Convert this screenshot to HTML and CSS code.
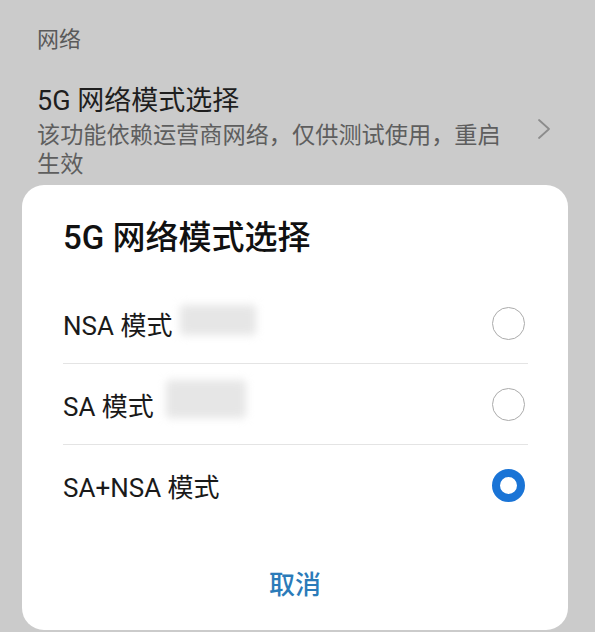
FILE: index.html
```html
<!DOCTYPE html>
<html lang="zh-CN">
<head>
<meta charset="utf-8">
<title>5G 网络模式选择</title>
<link rel="stylesheet" href="styles.css">
</head>
<body>
<div class="settings">
  <div class="section-label">网络</div>
  <div class="item">
    <div class="item-text">
      <div class="item-title">5G 网络模式选择</div>
      <div class="item-desc">该功能依赖运营商网络，仅供测试使用，重启生效</div>
    </div>
    <svg class="chevron" width="16" height="24" viewBox="0 0 16 24"><polyline points="3,3 13,12 3,21" fill="none" stroke="#8c8c8c" stroke-width="1.8" stroke-linejoin="round" stroke-linecap="round"/></svg>
  </div>
</div>
<div class="dialog">
  <div class="dialog-title">5G 网络模式选择</div>
  <div class="options">
    <div class="option">
      <span class="option-label">NSA 模式</span>
      <span class="blur blur-a"></span>
      <span class="radio"></span>
    </div>
    <div class="option">
      <span class="option-label">SA 模式</span>
      <span class="blur blur-b"></span>
      <span class="radio"></span>
    </div>
    <div class="option">
      <span class="option-label">SA+NSA 模式</span>
      <span class="radio radio-on"></span>
    </div>
  </div>
  <div class="dialog-footer">
    <span class="btn-cancel">取消</span>
  </div>
</div>
</body>
</html>
```
FILE: styles.css
```css
html, body {
  margin: 0;
  padding: 0;
}
body {
  width: 595px;
  height: 632px;
  overflow: hidden;
  background: #cbcbcb;
  font-family: Roboto, "Noto Sans CJK SC", sans-serif;
}
.settings {
  height: 185px;
  box-sizing: border-box;
  padding: 25px 0 0 37px;
}
.section-label {
  font-size: 22px;
  line-height: 30px;
  color: #5a5a5a;
}
.item {
  margin-top: 29px;
  display: flex;
  align-items: center;
}
.item-text {
  width: 472px;
}
.item-title {
  font-size: 27px;
  line-height: 34px;
  color: #1e1e1e;
}
.item-desc {
  margin-top: 3px;
  font-size: 23.2px;
  line-height: 29px;
  color: #5e5e5e;
}
.chevron {
  margin-left: 27px;
  margin-bottom: 6px;
}
.dialog {
  margin: 0 27px 0 22px;
  height: 445px;
  box-sizing: border-box;
  background: #ffffff;
  border-radius: 22px;
  padding: 31px 40px 0 41px;
}
.dialog-title {
  font-size: 33px;
  line-height: 43px;
  font-weight: 500;
  color: #111111;
}
.options {
  margin-top: 24px;
}
.option {
  height: 80px;
  display: flex;
  align-items: center;
  border-bottom: 1px solid #e4e4e4;
}
.option:last-child {
  border-bottom: none;
}
.option-label {
  font-size: 26px;
  color: #1a1a1a;
}
.blur {
  height: 30px;
  background: #e6e6e6;
  filter: blur(4px);
  border-radius: 4px;
}
.blur-a {
  width: 76px;
  margin-left: 8px;
  margin-bottom: 6px;
}
.blur-b {
  width: 80px;
  margin-left: 12px;
  margin-bottom: 10px;
  height: 38px;
}
.radio {
  margin-left: auto;
  margin-right: 3px;
  width: 33px;
  height: 33px;
  box-sizing: border-box;
  border-radius: 50%;
  border: 1.5px solid #ababab;
}
.radio-on {
  border: 8px solid #1a74d6;
}
.dialog-footer {
  margin-top: 35px;
  display: flex;
  justify-content: center;
  padding-right: 1px;
}
.btn-cancel {
  font-size: 26px;
  line-height: 50px;
  color: #2b7bb9;
  font-weight: 500;
}
```
